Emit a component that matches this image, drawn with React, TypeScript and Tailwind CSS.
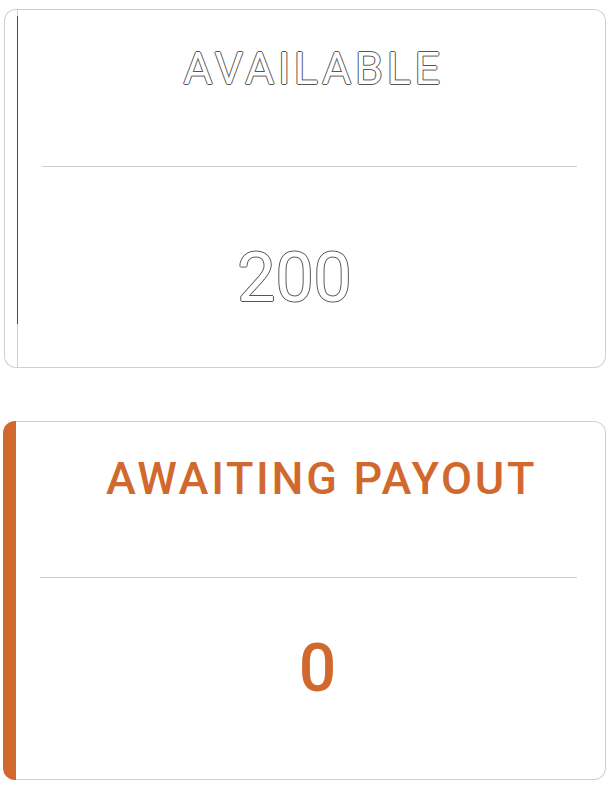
import React from "react";

const font = { fontFamily: "Roboto, 'Liberation Sans', sans-serif" };

function StatCard({
    label,
    value,
    accent,
}: {
    label: string;
    value: string;
    accent: boolean;
}) {
    return (
        <div className={accent ? "flex h-[359px] w-[603px]" : "ml-px flex h-[359px] w-[602px]"} style={font}>
            {accent ? (
                <div className="w-[13px] shrink-0 rounded-l-xl bg-[#d1692f]" />
            ) : (
                <div className="flex w-[14px] shrink-0 flex-col items-end rounded-l-xl border-y border-l border-[#cfcfcf]">
                    <div className="h-[6px] w-px bg-[#cfcfcf]" />
                    <div className="w-px flex-1 bg-[#4a4a4a]" />
                    <div className="h-[43px] w-px bg-[#cfcfcf]" />
                </div>
            )}
            <div className="flex flex-1 flex-col rounded-r-xl border-y border-r border-[#cfcfcf] bg-white pl-6 pr-7">
                {accent ? (
                    <div className="flex h-[155px] items-start justify-center pt-[23px] pl-[26px] text-[45px] font-medium tracking-[0.06em] text-[#d1692f]">
                        {label}
                    </div>
                ) : (
                    <div className="flex h-[156px] items-start justify-center pt-[25px] pl-[8px] text-[45px] font-normal tracking-[0.08em] text-white [text-shadow:1px_0_#555,-1px_0_#555,0_1px_#555,0_-1px_#555]">
                        {label}
                    </div>
                )}
                <div className="h-px bg-[#d0d0d0]" />
                {accent ? (
                    <div className="flex flex-1 items-start justify-center pt-[41px] pl-[18px] text-[66px] font-medium text-[#d1692f]">
                        {value}
                    </div>
                ) : (
                    <div className="flex flex-1 items-start justify-center pt-[60px] pr-[30px] text-[68px] font-normal text-white [text-shadow:1px_0_#555,-1px_0_#555,0_1px_#555,0_-1px_#555]">
                        {value}
                    </div>
                )}
            </div>
        </div>
    );
}

export default function App() {
    return (
        <div className="flex min-h-[789px] flex-col gap-[53px] bg-white pt-[9px] pl-[3px]">
            <StatCard label="AVAILABLE" value="200" accent={false} />
            <StatCard label="AWAITING PAYOUT" value="0" accent />
        </div>
    );
}
